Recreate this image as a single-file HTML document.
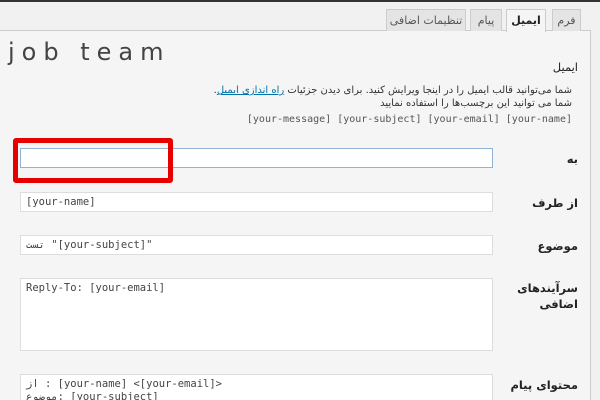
<!DOCTYPE html>
<html><head><meta charset="utf-8"><style>
html,body{margin:0;width:600px;height:400px;overflow:hidden}
body{background:#f1f1f1;font-family:Tahoma,"DejaVu Sans","Liberation Sans",sans-serif;position:relative;font-size:11px;color:#333}
.top{position:absolute;left:0;top:0;width:600px;height:2px;background:#333}
.panel{position:absolute;left:-1px;top:30px;width:590px;height:369px;background:#f5f5f5;border:1px solid #ccc;border-bottom:none}
.tab{position:absolute;top:9px;height:21px;border:1px solid #ccc;border-bottom:none;background:#e4e4e4;font-size:11px;line-height:21px;text-align:center;color:#555}
.tab.a{background:#f5f5f5;height:22px;font-weight:bold;color:#222}
.in{position:absolute;left:20px;width:473px;background:#fff;border:1px solid #ddd;font-family:"DejaVu Sans Mono","Liberation Mono",monospace;font-size:10.5px;color:#444;box-sizing:border-box;padding:3px 5px;overflow:hidden}
.lb{position:absolute;right:22px;font-size:11.5px;font-weight:bold;color:#222;text-align:right;direction:rtl}
.mono{font-family:"DejaVu Sans Mono","Liberation Mono",monospace}
</style></head><body>
<div class="top"></div>
<div class="panel"></div>
<div class="tab" style="left:552px;width:27px">فرم</div>
<div class="tab a" style="left:506px;width:38px">ایمیل</div>
<div class="tab" style="left:470px;width:30px">پیام</div>
<div class="tab" style="left:386px;width:78px">تنظیمات اضافی</div>
<div style="position:absolute;left:8px;top:38px;font-size:24px;letter-spacing:7px;color:#444;font-family:'DejaVu Sans',sans-serif">job team</div>
<div class="lb" style="top:60px;font-weight:normal">ایمیل</div>
<div style="position:absolute;right:28px;top:84px;direction:rtl;font-size:10px;line-height:13px;text-align:right;color:#333">شما می‌توانید قالب ایمیل را در اینجا ویرایش کنید. برای دیدن جزئیات <span style="color:#0073aa;text-decoration:underline">راه اندازی ایمیل</span>.<br>شما می توانید این برچسب‌ها را استفاده نمایید</div>
<div class="mono" style="position:absolute;right:28px;top:114px;font-size:10px;color:#555">[your-message] [your-subject] [your-email] [your-name]</div>
<div class="lb" style="top:152px">به</div>
<div class="in" style="top:148px;height:20px;border-color:#8fb4d6"></div>
<div style="position:absolute;left:13px;top:138px;width:150px;height:35px;border:5px solid #e60000;border-radius:3px"></div>
<div class="lb" style="top:196px">از طرف</div>
<div class="in" style="top:192px;height:20px">[your-name]</div>
<div class="lb" style="top:239px">موضوع</div>
<div class="in" style="top:235px;height:20px">تست "[your-subject]"</div>
<div class="lb" style="top:280px;line-height:16px">سرآیندهای<br>اضافی</div>
<div class="in" style="top:278px;height:73px">Reply-To: [your-email]</div>
<div class="lb" style="top:378px">محتوای پیام</div>
<div class="in" style="top:374px;height:26px;line-height:13px;border-bottom:none">از : [your-name] &lt;[your-email]&gt;<br>موضوع: [your-subject]</div>
</body></html>
